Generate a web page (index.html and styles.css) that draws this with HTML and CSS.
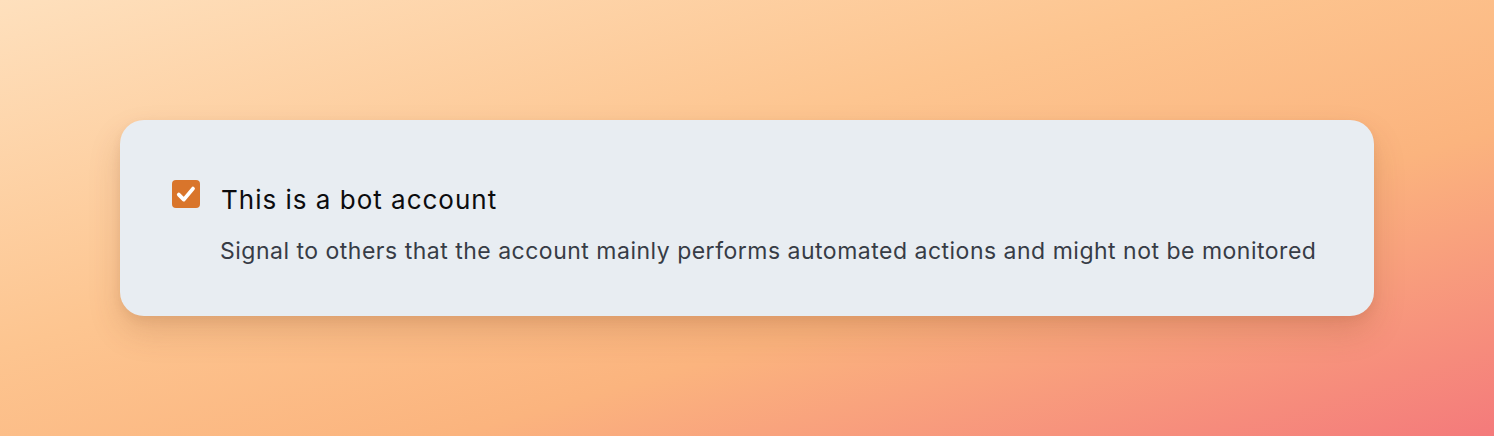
FILE: index.html
```html
<!DOCTYPE html>
<html>
<head>
  <title>Bot account</title>
  <link rel="stylesheet" href="styles.css">
</head>
<body>
  <div class="card">
    <label class="option">
      <span class="check">
        <svg viewBox="0 0 28 28" width="28" height="28">
          <path d="M6.8 14.6 L11.8 19.6 L21 8.6" fill="none" stroke="#fff" stroke-width="3.8" stroke-linecap="round" stroke-linejoin="round"/>
        </svg>
      </span>
      <span class="title">This is a bot account</span>
    </label>
    <p class="hint">Signal to others that the account mainly performs automated actions and might not be monitored</p>
  </div>
</body>
</html>
```

FILE: styles.css
```css
html, body {
  margin: 0;
  height: 100%;
}
body {
  background: linear-gradient(to bottom right, #fee0bd 0%, #fdc590 40%, #fbb47e 65%, #f47a7b 100%);
  font-family: 'Inter', 'Noto Sans', sans-serif;
  display: flex;
  align-items: center;
  justify-content: center;
}
.card {
  width: 1254px;
  height: 196px;
  box-sizing: border-box;
  padding: 60px 52px 0;
  background: #e8edf2;
  border-radius: 24px;
  box-shadow: 0 16px 32px rgba(120, 60, 30, 0.18), 0 4px 10px rgba(120, 60, 30, 0.08);
}
.option {
  display: flex;
  align-items: flex-start;
  gap: 21px;
}
.check {
  width: 28px;
  height: 28px;
  border-radius: 4px;
  background: #d9752b;
  display: flex;
}
.title {
  font-size: 26px;
  letter-spacing: 1px;
  color: #0c0c0e;
  line-height: 40px;
}
.hint {
  margin: 16px 0 0 48px;
  font-size: 23px;
  letter-spacing: 0.5px;
  color: #373c46;
  line-height: 30px;
}
```
